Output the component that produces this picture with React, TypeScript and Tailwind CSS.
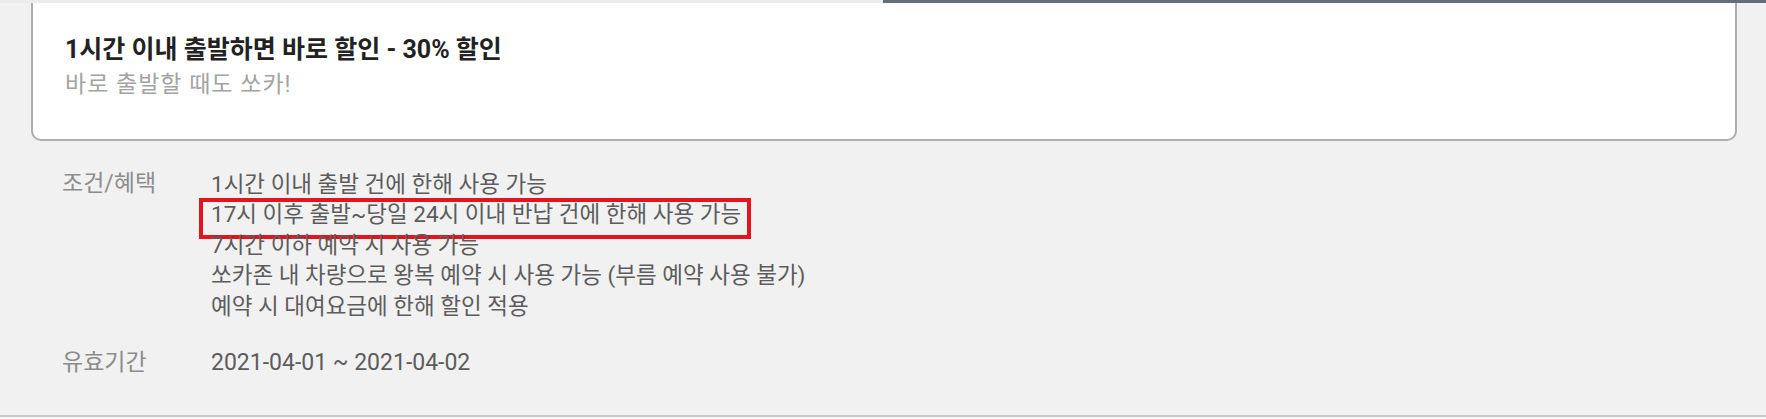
const conditions = [
  "1시간 이내 출발 건에 한해 사용 가능",
  "17시 이후 출발~당일 24시 이내 반납 건에 한해 사용 가능",
  "7시간 이하 예약 시 사용 가능",
  "쏘카존 내 차량으로 왕복 예약 시 사용 가능 (부름 예약 사용 불가)",
  "예약 시 대여요금에 한해 할인 적용",
];

// 강조 표시할 조건 줄
const highlightIndex = 1;

export default function App() {
  return (
    <div className="w-[1766px] h-[419px] bg-[#f1f1f1] font-['Roboto','Noto_Sans_CJK_KR',sans-serif] overflow-hidden flex flex-col">
      <div className="flex h-[3px] shrink-0">
        <div className="w-[883px] bg-[#ebebeb]" />
        <div className="flex-1 bg-[#656d78]" />
      </div>

      <div className="ml-[31px] mr-[29px] h-[138px] shrink-0 bg-white border-2 border-t-0 border-[#adadad] rounded-b-[10px] pl-[32px] pt-[29px]">
        <div className="text-[25px] leading-[36px] font-bold text-[#222222]">
          1시간 이내 출발하면 바로 할인 - 30% 할인
        </div>
        <div className="text-[23px] leading-[32px] text-[#a3a3a3] tracking-[1px] mt-[1px]">
          바로 출발할 때도 쏘카!
        </div>
      </div>

      <div className="flex-1 flex flex-col pt-[28px] pl-[62px]">
        <div className="flex">
          <div className="w-[149px] shrink-0 text-[23px] leading-[30px] text-[#8c8c8c]">조건/혜택</div>
          <div className="flex flex-col text-[22.5px] leading-[30.4px] text-[#5c5c5c]">
            {conditions.map((c, i) => (
              <div key={i} className="relative">
                {c}
                {i === highlightIndex && (
                  <span className="absolute left-[-12px] top-[-1px] w-[552px] h-[41px] border-[4px] border-[#e3141e]" />
                )}
              </div>
            ))}
          </div>
        </div>

        <div className="flex mt-[27px]">
          <div className="w-[149px] shrink-0 text-[23px] leading-[30px] text-[#8c8c8c]">유효기간</div>
          <div className="text-[23px] leading-[30px] text-[#5c5c5c]">2021-04-01 ~ 2021-04-02</div>
        </div>
      </div>

      <div className="h-[2px] bg-[#c8c8c8] shrink-0" />
      <div className="h-[2px] bg-[#f7f7f7] shrink-0" />
    </div>
  );
}
